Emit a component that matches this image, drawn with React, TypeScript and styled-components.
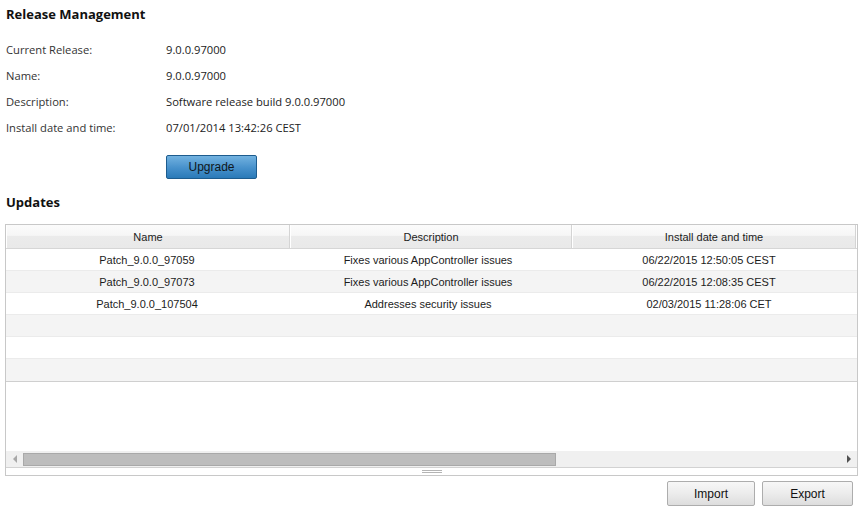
import React from "react";
import styled, { createGlobalStyle } from "styled-components";

const GlobalStyle = createGlobalStyle`
  html, body {
    margin: 0;
    padding: 0;
    background: #ffffff;
  }
  body {
    font-family: "Open Sans", "Noto Sans", sans-serif;
    color: #222222;
  }
`;

const Page = styled.div`
  width: 866px;
  height: 514px;
  box-sizing: border-box;
  padding: 4px 8px 0 5px;
  display: flex;
  flex-direction: column;
  overflow: hidden;
`;

const SectionTitle = styled.h2<{ $top?: number }>`
  margin: ${(p) => p.$top ?? 0}px 0 0 1px;
  height: 20px;
  line-height: 20px;
  font-size: 13px;
  font-weight: 700;
  color: #111111;
`;

const InfoList = styled.div`
  margin-top: 13px;
  display: grid;
  grid-template-columns: 160px 1fr;
  grid-auto-rows: 26px;
  padding-left: 1px;
`;

const InfoLabel = styled.span`
  font-size: 11.2px;
  line-height: 26px;
  color: #333333;
`;

const InfoValue = styled.span`
  font-size: 11.2px;
  line-height: 26px;
  color: #222222;
`;

const UpgradeButton = styled.button`
  margin: 14px 0 0 161px;
  width: 91px;
  height: 24px;
  padding: 0;
  border: 1px solid #1d5c8e;
  border-radius: 2px;
  background: linear-gradient(#72b2e0, #4690cb 55%, #2a7ab8);
  font-family: "Liberation Sans", Arial, sans-serif;
  font-size: 12px;
  color: #101820;
  align-self: flex-start;
  cursor: pointer;
`;

const Grid = styled.div`
  margin-top: 12px;
  height: 252px;
  box-sizing: border-box;
  border: 1px solid #c8c8c8;
  display: flex;
  flex-direction: column;
  font-family: "Liberation Sans", Arial, sans-serif;
  font-size: 11px;
  color: #1c1c1c;
`;

const HeaderRow = styled.div`
  display: flex;
  height: 24px;
  box-sizing: border-box;
  border-bottom: 1px solid #d6d6d6;
`;

const HeaderCell = styled.div<{ $width: number }>`
  width: ${(p) => p.$width}px;
  flex: none;
  box-sizing: border-box;
  display: flex;
  align-items: center;
  justify-content: center;
  background: linear-gradient(#fbfbfb 0%, #f6f6f6 45%, #ebebeb 50%, #e9e9e9 100%);
  border-left: 1px solid #ffffff;
  border-right: 1px solid #d4d4d4;
`;

const HeaderFiller = styled.div`
  flex: 1;
  background: #ffffff;
`;

const Body = styled.div`
  border-bottom: 1px solid #cfcfcf;
`;

const Row = styled.div<{ $alt: boolean }>`
  display: flex;
  height: 22px;
  box-sizing: border-box;
  background: ${(p) => (p.$alt ? "#f4f4f4" : "#ffffff")};
  border-bottom: 1px solid #ebebeb;

  &:last-child {
    border-bottom: none;
  }
`;

const Cell = styled.div<{ $width: number; $shift: number }>`
  width: ${(p) => p.$width}px;
  flex: none;
  box-sizing: border-box;
  display: flex;
  align-items: center;
  justify-content: center;
  white-space: nowrap;
  padding-left: ${(p) => Math.max(0, p.$shift * 2)}px;
  padding-right: ${(p) => Math.max(0, -p.$shift * 2)}px;
`;

const Blank = styled.div`
  flex: 1;
`;

const ScrollBar = styled.div`
  height: 16px;
  background: #f0f0f0;
  display: flex;
  align-items: center;
  border-bottom: 1px solid #d2d2d2;
`;

const Arrow = styled.div<{ $dir: "left" | "right" }>`
  width: 17px;
  height: 16px;
  flex: none;
  display: flex;
  align-items: center;
  justify-content: center;
  &::before {
    content: "";
    width: 0;
    height: 0;
    border-top: 4px solid transparent;
    border-bottom: 4px solid transparent;
    ${(p) =>
      p.$dir === "left"
        ? "border-right: 4px solid #a8a8a8;"
        : "border-left: 4px solid #505050;"}
  }
`;

const Track = styled.div`
  flex: 1;
  height: 100%;
  display: flex;
  align-items: center;
`;

const Thumb = styled.div`
  width: 533px;
  height: 13px;
  box-sizing: border-box;
  background: #bdbdbd;
  border: 1px solid #a9a9a9;
`;

const Grip = styled.div`
  height: 7px;
  display: flex;
  align-items: center;
  justify-content: center;
  &::before {
    content: "";
    width: 20px;
    height: 3px;
    box-sizing: border-box;
    border-top: 1px solid #b4b4b4;
    border-bottom: 1px solid #b4b4b4;
  }
`;

const Actions = styled.div`
  margin-top: 5px;
  display: flex;
  justify-content: flex-end;
  gap: 7px;
  padding-right: 5px;
`;

const GreyButton = styled.button<{ $width: number }>`
  width: ${(p) => p.$width}px;
  height: 25px;
  padding: 0;
  border: 1px solid #adadad;
  border-radius: 2px;
  background: linear-gradient(#f7f7f7, #ececec 50%, #dddddd);
  font-family: "Liberation Sans", Arial, sans-serif;
  font-size: 12px;
  color: #111111;
  cursor: pointer;
`;

// shift moves the cell text off the header's centre line
const columns = [
  { key: "name", title: "Name", width: 284, shift: -1 },
  { key: "description", title: "Description", width: 282, shift: -3 },
  { key: "installed", title: "Install date and time", width: 284, shift: -5 },
] as const;

type Update = { name: string; description: string; installed: string };

const updates: Update[] = [
  { name: "Patch_9.0.0_97059", description: "Fixes various AppController issues", installed: "06/22/2015 12:50:05 CEST" },
  { name: "Patch_9.0.0_97073", description: "Fixes various AppController issues", installed: "06/22/2015 12:08:35 CEST" },
  { name: "Patch_9.0.0_107504", description: "Addresses security issues", installed: "02/03/2015 11:28:06 CET" },
];

const release = [
  ["Current Release:", "9.0.0.97000"],
  ["Name:", "9.0.0.97000"],
  ["Description:", "Software release build 9.0.0.97000"],
  ["Install date and time:", "07/01/2014 13:42:26 CEST"],
];

// the grid always shows six striped rows, empty ones included
const VISIBLE_ROWS = 6;

export default function App() {
  const rows: (Update | null)[] = Array.from({ length: VISIBLE_ROWS }, (_, i) => updates[i] ?? null);

  return (
    <>
      <GlobalStyle />
      <Page>
        <SectionTitle>Release Management</SectionTitle>
        <InfoList>
          {release.map(([label, value]) => (
            <React.Fragment key={label}>
              <InfoLabel>{label}</InfoLabel>
              <InfoValue>{value}</InfoValue>
            </React.Fragment>
          ))}
        </InfoList>
        <UpgradeButton>Upgrade</UpgradeButton>

        <SectionTitle $top={13}>Updates</SectionTitle>
        <Grid>
          <HeaderRow>
            {columns.map((c) => (
              <HeaderCell key={c.key} $width={c.width}>
                {c.title}
              </HeaderCell>
            ))}
            <HeaderFiller />
          </HeaderRow>
          <Body>
            {rows.map((r, i) => (
              <Row key={i} $alt={i % 2 === 1}>
                {columns.map((c) => (
                  <Cell key={c.key} $width={c.width} $shift={c.shift}>
                    {r ? r[c.key] : ""}
                  </Cell>
                ))}
              </Row>
            ))}
          </Body>
          <Blank />
          <ScrollBar>
            <Arrow $dir="left" />
            <Track>
              <Thumb />
            </Track>
            <Arrow $dir="right" />
          </ScrollBar>
          <Grip />
        </Grid>
        <Actions>
          <GreyButton $width={88}>Import</GreyButton>
          <GreyButton $width={91}>Export</GreyButton>
        </Actions>
      </Page>
    </>
  );
}
